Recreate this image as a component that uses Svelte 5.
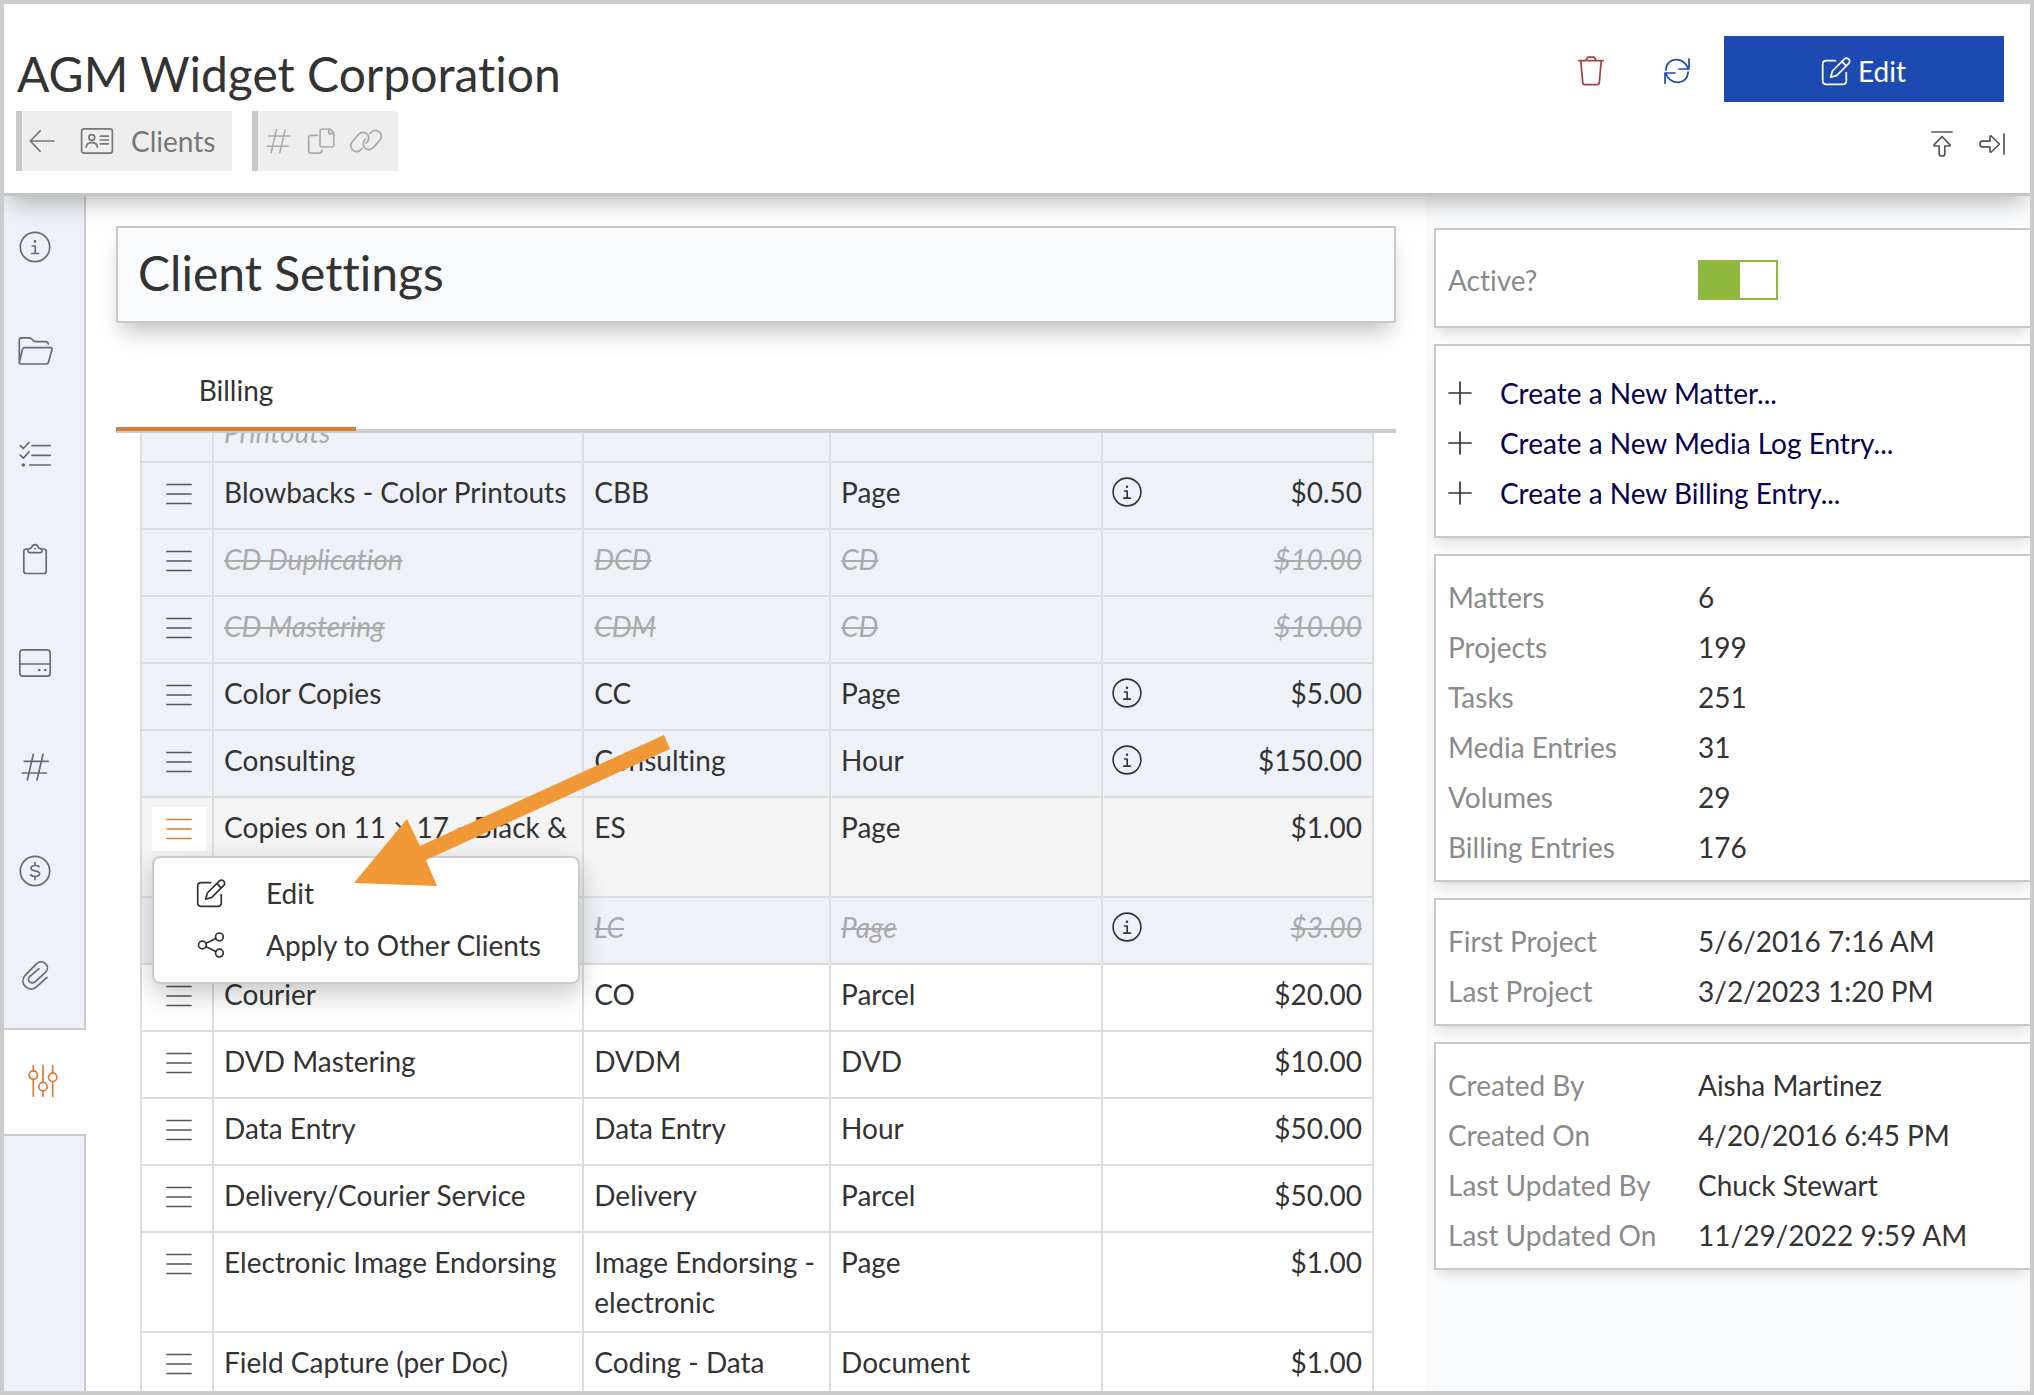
<script>
  const sections = [
    { icon: 'info', label: 'Information' },
    { icon: 'folder', label: 'Matters' },
    { icon: 'checklist', label: 'Tasks' },
    { icon: 'clipboard', label: 'Notes' },
    { icon: 'drive', label: 'Media' },
    { icon: 'hash', label: 'Numbers' },
    { icon: 'dollar', label: 'Billing' },
    { icon: 'paperclip', label: 'Attachments' },
    { icon: 'sliders', label: 'Settings', active: true }
  ];

  const rows = [
    { name: 'Blowbacks - Color Printouts', code: 'CBB', unit: 'Page', price: '$0.50', shaded: true, info: true },
    { name: 'CD Duplication', code: 'DCD', unit: 'CD', price: '$10.00', shaded: true, inactive: true },
    { name: 'CD Mastering', code: 'CDM', unit: 'CD', price: '$10.00', shaded: true, inactive: true },
    { name: 'Color Copies', code: 'CC', unit: 'Page', price: '$5.00', shaded: true, info: true },
    { name: 'Consulting', code: 'Consulting', unit: 'Hour', price: '$150.00', shaded: true, info: true },
    { name: 'Copies on 11 × 17 - Black & White', code: 'ES', unit: 'Page', price: '$1.00', open: true },
    { name: '', code: 'LC', unit: 'Page', price: '$3.00', shaded: true, inactive: true, info: true },
    { name: 'Courier', code: 'CO', unit: 'Parcel', price: '$20.00' },
    { name: 'DVD Mastering', code: 'DVDM', unit: 'DVD', price: '$10.00' },
    { name: 'Data Entry', code: 'Data Entry', unit: 'Hour', price: '$50.00' },
    { name: 'Delivery/Courier Service', code: 'Delivery', unit: 'Parcel', price: '$50.00' },
    { name: 'Electronic Image Endorsing', code: 'Image Endorsing - electronic', unit: 'Page', price: '$1.00' },
    { name: 'Field Capture (per Doc)', code: 'Coding - Data', unit: 'Document', price: '$1.00' }
  ];

  const actions = ['Create a New Matter...', 'Create a New Media Log Entry...', 'Create a New Billing Entry...'];

  const facts = [
    [['Matters', '6'], ['Projects', '199'], ['Tasks', '251'], ['Media Entries', '31'], ['Volumes', '29'], ['Billing Entries', '176']],
    [['First Project', '5/6/2016 7:16 AM'], ['Last Project', '3/2/2023 1:20 PM']],
    [['Created By', 'Aisha Martinez'], ['Created On', '4/20/2016 6:45 PM'], ['Last Updated By', 'Chuck Stewart'], ['Last Updated On', '11/29/2022 9:59 AM']]
  ];

  let active = $state(true);
</script>

{#snippet icon(name)}
  <svg class="icon" viewBox="0 0 36 36" aria-hidden="true">
    {#if name === 'info'}
      <circle cx="18" cy="18" r="14.7" />
      <circle class="dot" cx="18" cy="12.4" r="1.3" />
      <path d="M15.4 17h2.8v7.4M14.6 24.5h7" />
    {:else if name === 'folder'}
      <path d="M2.3 29.5V6.8q0-2 2-2h8q1.2 0 2 .8l2.6 2.4q.8.6 1.8.6h9.8q2.5 0 2.8 2.4M7.4 14.6h26.2q1.8 0 1.4 1.6l-3.4 12.8q-.6 2-2.4 2H3.8q-1.8 0-1.4-1.8l3-12.6q.6-2 2-2z" />
    {:else if name === 'checklist'}
      <path d="M3.2 8.6l3.2 2.9 5.6-6.2M3.2 18.2l3.2 2.9 5.6-6.2M15 8.7h18.2M15 18.3h18.2M12.8 28h20.4" />
      <circle class="dot" cx="6.3" cy="28" r="1.8" />
    {:else if name === 'clipboard'}
      <path d="M11 8H9.3Q6.8 8 6.8 10.5V30q0 2.5 2.5 2.5h17.4q2.5 0 2.5-2.5V10.5Q29.2 8 26.7 8H25" />
      <path d="M12.3 11.6q-1.3 0-1.3-1.3V9.6q0-1.3 1.3-1.8l2-.9q1-3.3 3.7-3.3t3.7 3.3l2 .9q1.3.5 1.3 1.8v.7q0 1.3-1.3 1.3z" />
      <circle class="dot" cx="18" cy="7.6" r=".9" />
    {:else if name === 'drive'}
      <rect x="2.8" y="4.8" width="30.4" height="26.4" rx="3" />
      <path d="M2.8 19h30.4" />
      <circle class="dot" cx="22.3" cy="25" r="1.3" />
      <circle class="dot" cx="28.3" cy="25" r="1.3" />
    {:else if name === 'hash'}
      <path d="M16.3 5.3l-6 25.7M26 5.3l-6 25.7M7.3 12.3h24M5.3 24h24" />
    {:else if name === 'dollar'}
      <circle cx="18" cy="18" r="14.7" />
      <path d="M22.2 13.7q-1.2-1.2-4.2-1.2c-2.6 0-4 1.1-4 2.7 0 3.6 8.6 1.8 8.6 5.4 0 1.900-1.800 2.900-4.400 2.900-2.200 0-3.600-.6-4.600-1.500M18 9.500v3M18 23.500v3" />
    {:else if name === 'paperclip'}
      <path d="M30 20.3L19.2 30.2C12 36 1.500 27 8 18.600L19.400 6.900C25.600 1.200 34.200 9 28.700 15.200L18.400 24.600C14.600 28 9 23.600 12.600 19.700L22 11.700" />
    {:else if name === 'sliders'}
      <path d="M8.3 2.700v5.200M8.3 16.300v17M18 2.700v16.800M18 27.900v5.400M27.700 2.700v7.400M27.700 18.500v14.800" />
      <circle cx="8.3" cy="12.1" r="4.2" />
      <circle cx="18" cy="23.7" r="4.2" />
      <circle cx="27.7" cy="14.3" r="4.2" />
    {:else if name === 'back'}
      <path d="M6.3 18h23.6M16.2 7.8L6.3 18l9.9 10.3" />
    {:else if name === 'card'}
      <rect x="2.6" y="5.9" width="30.8" height="24.2" rx="2.5" />
      <circle cx="12.8" cy="14.5" r="2.9" />
      <path d="M7.2 24.2c.6-6.2 10.6-6.2 11.2 0M21.3 13.2h8M21.3 17h8M21.3 20.8h8" />
    {:else if name === 'copy'}
      <path d="M19.3 6h7.7l3.7 3.7v12q0 2.300-2.300 2.300h-9.100q-2.300 0-2.300-2.300V8.300q0-2.300 2.300-2.300zM26 6.300v4.400h4.500M14.300 12.300H8q-2.300 0-2.300 2.300v13.200q0 2.300 2.300 2.300h8.800q2.300 0 2.300-3" />
    {:else if name === 'link'}
      <path d="M14 25.500l-1.700 1.700C7 31 0 25 4 19L10.500 11.500C14.500 7.500 22 10 20.500 16.500c-.3 1.500-1.300 3-2.500 3.500M22 10.500l1.700-1.700C29 5 36 11 32 17L25.500 24.500C21.500 28.500 14 26 15.500 19.500c.3-1.500 1.300-3 2.500-3.500" />
    {:else if name === 'trash'}
      <path d="M6 7.7h24M7.8 8l1.9 21.4q.2 2.2 2.3 2.2h12q2.1 0 2.3-2.2L28.2 8M12.8 7.7l1.3-2.6q.5-1 1.6-1h4.6q1.1 0 1.6 1l1.3 2.6" />
    {:else if name === 'refresh'}
      <path d="M6.9 17C7.5 3.6 25 3.4 29.3 15.7M30 5.800V16H20M29.100 19C28.500 32.400 11 32.600 6.700 20.300M6 30.200V20h10" />
    {:else if name === 'edit'}
      <path d="M17.5 7.7H8.3q-3.6 0-3.6 3.6v16.4q0 3.6 3.6 3.6h16.4q3.6 0 3.6-3.6V19.5M12.6 24.2l1.8-6.2L26.2 6.2q2.2-2 4.4 0t0 4.4L18.8 22.4zM24 8.6l4.2 4.2" />
    {:else if name === 'to-top'}
      <path d="M8 6h20M18 10.5l8 8.3q.4 1.2-.8 1.2h-4.4v8q0 2-2.8 2t-2.8-2v-8h-4.4q-1.2 0-.8-1.2z" />
    {:else if name === 'to-side'}
      <path d="M30 8v20M25.5 18l-8.3 8q-1.2.4-1.2-.8v-4.4H8q-2 0-2-2.8t2-2.8h8v-4.400q0-1.200 1.200-.8z" />
    {:else if name === 'share'}
      <circle cx="9.4" cy="18" r="3.9" />
      <circle cx="26.4" cy="9.9" r="3.9" />
      <circle cx="26.4" cy="26.1" r="3.9" />
      <path d="M13 16.3l9.800-4.700M13 19.700l9.800 4.700" />
    {:else if name === 'menu'}
      <path d="M6 8.5h24M6 18h24M6 27.5h24" />
    {:else if name === 'plus'}
      <path d="M7 18h22M18 7v22" />
    {/if}
  </svg>
{/snippet}

<div class="app">
  <header>
    <div class="heading">
      <h1>AGM Widget Corporation</h1>
      <div class="crumbs">
        <a class="crumb" href="#clients">{@render icon('back')}{@render icon('card')}<span>Clients</span></a>
        <div class="crumb tools">
          <button aria-label="Number">{@render icon('hash')}</button>
          <button aria-label="Copy">{@render icon('copy')}</button>
          <button aria-label="Link">{@render icon('link')}</button>
        </div>
      </div>
    </div>
    <div class="controls">
      <div class="primary">
        <button class="tool delete" aria-label="Delete">{@render icon('trash')}</button>
        <button class="tool reload" aria-label="Refresh">{@render icon('refresh')}</button>
        <button class="edit">{@render icon('edit')}<span>Edit</span></button>
      </div>
      <div class="secondary">
        <button aria-label="Scroll to top">{@render icon('to-top')}</button>
        <button aria-label="Collapse panel">{@render icon('to-side')}</button>
      </div>
    </div>
  </header>

  <div class="body">
    <nav aria-label="Sections">
      {#each sections as s}
        <a href="#{s.icon}" class:active={s.active} aria-label={s.label}>{@render icon(s.icon)}</a>
      {/each}
      <div class="filler"></div>
    </nav>

    <main>
      <h2>Client Settings</h2>
      <div class="tabs" role="tablist">
        <button role="tab" aria-selected="true">Billing</button>
      </div>
      <div class="scroller">
        <table>
          <colgroup><col class="c-menu" /><col class="c-name" /><col class="c-code" /><col class="c-unit" /><col class="c-price" /></colgroup>
          <tbody>
            <tr class="shaded inactive tail">
              <td></td><td>Printouts</td><td></td><td></td><td></td>
            </tr>
            {#each rows as r}
              <tr class:shaded={r.shaded} class:inactive={r.inactive} class:open={r.open}>
                <td class="handle">
                  <button aria-label="Row actions">{@render icon('menu')}</button>
                  {#if r.open}
                    <div class="popup" role="menu">
                      <button role="menuitem">{@render icon('edit')}<span>Edit</span></button>
                      <button role="menuitem">{@render icon('share')}<span>Apply to Other Clients</span></button>
                    </div>
                  {/if}
                </td>
                <td><span class="value">{r.name}</span></td>
                <td><span class="value">{r.code}</span></td>
                <td><span class="value">{r.unit}</span></td>
                <td>
                  <div class="price">
                    {#if r.info}{@render icon('info')}{/if}
                    <span class="value">{r.price}</span>
                  </div>
                </td>
              </tr>
            {/each}
          </tbody>
        </table>
      </div>
    </main>

    <aside>
      <section class="switch">
        <label for="active">Active?</label>
        <input id="active" type="checkbox" role="switch" bind:checked={active} />
      </section>
      <section class="actions">
        {#each actions as a}
          <div>{@render icon('plus')}<a href="#create">{a}</a></div>
        {/each}
      </section>
      {#each facts as group}
        <section>
          <dl>
            {#each group as [label, value]}
              <dt>{label}</dt><dd>{value}</dd>
            {/each}
          </dl>
        </section>
      {/each}
    </aside>
  </div>

  <svg class="pointer" viewBox="0 0 320 156" aria-hidden="true">
    <path d="M314 5L70 116L57 89L4 153L87 156L76 130L320 19Z" />
  </svg>
</div>

<style>
  :global(body) { background: #fff; }

  .app {
    position: relative;
    display: flex;
    flex-direction: column;
    height: 100vh;
    box-sizing: border-box;
    border: 4px solid #ccc;
    overflow: hidden;
    font: 400 28px/40px Lato, "Open Sans", sans-serif;
    font-variant-ligatures: none;
    color: #333;
    background: #fff;
  }

  h1, h2, dl, dd { margin: 0; }
  a { color: inherit; text-decoration: none; }
  button {
    margin: 0;
    padding: 0;
    border: 0;
    background: none;
    font: inherit;
    font-variant-ligatures: none;
    color: inherit;
    display: flex;
    align-items: center;
    justify-content: center;
    cursor: pointer;
  }

  .icon {
    flex: none;
    display: block;
    width: 36px;
    height: 36px;
    fill: none;
    stroke: currentColor;
    stroke-width: 1.7;
    stroke-linecap: round;
    stroke-linejoin: round;
  }
  .dot { fill: currentColor; stroke: none; }

  header {
    position: relative;
    z-index: 2;
    flex: none;
    display: flex;
    justify-content: space-between;
    padding: 32px 26px 22px 13px;
    border-bottom: 3px solid #c4c4c4;
    background: #fff;
    box-shadow: 0 12px 22px -6px rgba(0, 0, 0, 0.28);
  }
  .heading { padding-top: 8px; }
  h1, h2 { font-size: 48px; line-height: 60px; font-weight: 400; }
  .crumbs { display: flex; gap: 20px; margin: 7px 0 0 -1px; }
  .crumb {
    display: flex;
    align-items: center;
    height: 60px;
    border-left: 6px solid #c8c8c8;
    background: #eee;
    color: #777;
  }
  a.crumb { gap: 19px; padding: 0 17px 0 2px; }
  a.crumb span { margin-left: -3px; }
  .tools { gap: 9px; padding: 0 14px 0 4px; color: #aaa; }
  .tools button:first-child .icon { width: 32px; height: 32px; }

  .primary { display: flex; align-items: center; justify-content: flex-end; }
  .primary button { box-sizing: border-box; height: 66px; padding-top: 3px; }
  .tool { width: 86px; }
  .delete { color: #a64040; }
  .reload { color: #1d4ab2; }
  .edit {
    width: 280px;
    margin-left: 4px;
    padding-right: 4px;
    gap: 4px;
    background: #1d4ab2;
    color: #fff;
  }
  .secondary {
    display: flex;
    justify-content: flex-end;
    gap: 14px;
    margin: 24px -6px 0 0;
    color: #555;
  }

  .body {
    flex: 1;
    min-height: 0;
    display: grid;
    grid-template-columns: 82px minmax(0, 1fr) 604px;
  }

  nav { display: flex; flex-direction: column; color: #6b6b6b; }
  nav a {
    flex: none;
    box-sizing: border-box;
    display: flex;
    align-items: center;
    height: 104px;
    padding: 0 0 3px 13px;
    border-right: 2px solid #ccc;
    background: #eef1f7;
  }
  nav a.active {
    height: 108px;
    padding-left: 21px;
    border: solid #ccc;
    border-width: 2px 0;
    background: #fff;
    color: #db7b35;
  }
  .filler { flex: 1; border-right: 2px solid #ccc; background: #eef1f7; }

  main { display: flex; flex-direction: column; min-height: 0; padding: 30px 30px 0; }
  h2 {
    flex: none;
    padding: 15px 20px 18px;
    border: 2px solid #c8c8c8;
    background: #fafbfd;
    box-shadow: 0 14px 22px -6px rgba(0, 0, 0, 0.26);
  }
  .tabs { flex: none; display: flex; margin-top: 30px; border-bottom: 4px solid #ccc; }
  .tabs button {
    width: 240px;
    margin-bottom: -2px;
    padding: 17px 0;
    border-bottom: 4px solid #db7b35;
  }
  .scroller { flex: 1; min-height: 0; margin: 0 22px 0 24px; overflow: hidden; }
  table {
    width: 100%;
    margin-top: -37px;
    table-layout: fixed;
    border-collapse: separate;
    border-spacing: 0;
  }
  .c-menu { width: 74px; }
  .c-name { width: 30%; }
  .c-code { width: 20%; }
  .c-unit { width: 22%; }
  .c-price { width: 22%; }
  td {
    box-sizing: border-box;
    height: 67px;
    padding: 9px 10px;
    border: solid #ddd;
    border-width: 0 2px 2px 0;
    vertical-align: top;
  }
  td:first-child { border-left-width: 2px; }
  .shaded { background: #eef1f7; }
  .open { background: #f4f4f4; }
  .inactive td:not(.handle) { font-style: italic; color: #aaa; }
  .inactive .value { text-decoration: line-through; text-decoration-thickness: 2px; }
  .inactive .icon { color: #333; }
  .inactive .handle .icon { color: #555; }
  .tail td { vertical-align: bottom; }
  .handle { position: relative; padding: 9px 7px 9px 10px; color: #555; }
  .handle > button { width: 54px; height: 44px; }
  .open .handle > button { background: #fff; color: #db7b35; }
  .price { display: flex; align-items: center; height: 40px; }
  .price .icon { width: 34px; height: 34px; margin-left: -3px; }
  .price .value { margin-left: auto; }

  .popup {
    position: absolute;
    z-index: 1;
    top: 58px;
    left: 10px;
    width: 424px;
    padding: 9px 0 11px;
    border: 2px solid #ccc;
    border-radius: 8px;
    background: #fff;
    color: #333;
    box-shadow: 0 10px 26px rgba(0, 0, 0, 0.22);
  }
  .popup button {
    width: 100%;
    height: 52px;
    padding-left: 39px;
    gap: 37px;
    justify-content: flex-start;
  }

  aside {
    display: flex;
    flex-direction: column;
    gap: 16px;
    padding: 32px 0 0 8px;
    background: #fafbfd;
  }
  section {
    padding: 16px 12px 8px;
    border: solid #c8c8c8;
    border-width: 2px 0 2px 2px;
    background: #fff;
    box-shadow: 0 8px 12px -4px rgba(0, 0, 0, 0.14);
  }
  .switch { display: grid; grid-template-columns: 250px 1fr; align-items: center; padding: 30px 12px 26px; }
  dl { display: grid; grid-template-columns: 250px 1fr; line-height: 50px; }
  dt, label { color: #8a8a8a; }
  input {
    appearance: none;
    box-sizing: border-box;
    width: 80px;
    height: 40px;
    margin: 0;
    border: 2px solid #8fb93e;
    background: linear-gradient(#8fb93e, #8fb93e) right / 40px 100% no-repeat #fff;
  }
  input:checked { background-position: left; }
  .actions { padding: 22px 6px 18px; line-height: 50px; }
  .actions div { display: flex; align-items: center; gap: 22px; }
  .actions a { color: #06004f; }

  .pointer {
    position: absolute;
    z-index: 3;
    top: 726px;
    left: 346px;
    width: 320px;
    height: 156px;
    fill: #f09835;
    pointer-events: none;
  }
</style>
